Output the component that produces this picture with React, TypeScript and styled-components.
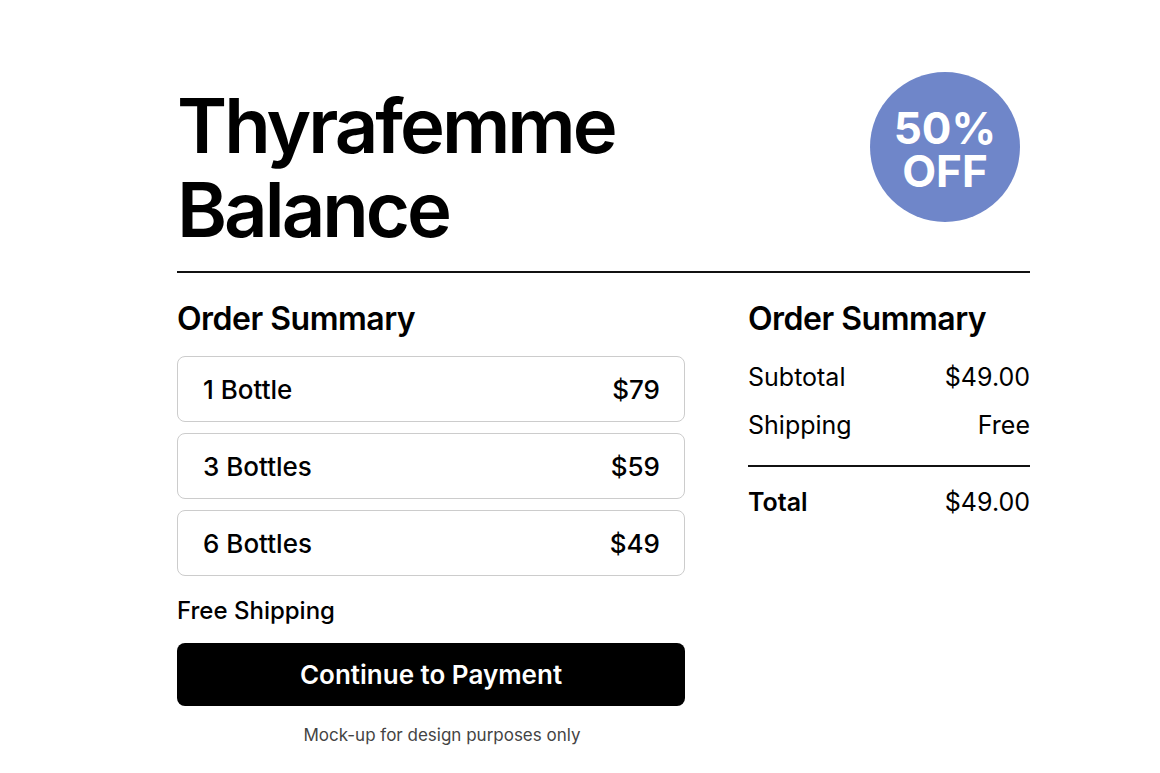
import styled, { createGlobalStyle } from "styled-components";

const GlobalStyle = createGlobalStyle`
  body {
    margin: 0;
    background: #ffffff;
    font-family: "Inter", "Liberation Sans", sans-serif;
    color: #000000;
  }
`;

const Page = styled.main`
  width: 853px;
  margin-left: 177px;
  padding-top: 72px;
`;

const Header = styled.header`
  display: flex;
  justify-content: space-between;
  align-items: flex-start;
`;

const Title = styled.h1`
  margin: 11px 0 0;
  font-size: 76px;
  line-height: 84px;
  font-weight: 600;
  letter-spacing: -3px;
`;

const Badge = styled.div`
  width: 150px;
  height: 150px;
  box-sizing: border-box;
  padding-top: 6px;
  margin-right: 10px;
  border-radius: 50%;
  background: #6f86c9;
  color: #ffffff;
  display: flex;
  flex-direction: column;
  align-items: center;
  justify-content: center;
  font-size: 44px;
  line-height: 43px;
  font-weight: 700;
`;

const Rule = styled.hr<{ $gap: number }>`
  margin: ${(p) => p.$gap}px 0 0;
  border: none;
  border-top: 2px solid #111111;
`;

const Columns = styled.section`
  display: grid;
  grid-template-columns: 508px 282px;
  justify-content: space-between;
  margin-top: 26px;
`;

const Column = styled.div`
  display: flex;
  flex-direction: column;
`;

const Heading = styled.h2`
  margin: 0;
  font-size: 32px;
  line-height: 40px;
  font-weight: 600;
  letter-spacing: -0.5px;
`;

const Options = styled.div`
  display: flex;
  flex-direction: column;
  gap: 11px;
  margin-top: 17px;
`;

const Option = styled.div`
  height: 64px;
  border: 1px solid #cccccc;
  border-radius: 8px;
  padding: 0 24px 0 25px;
  display: flex;
  justify-content: space-between;
  align-items: center;
  font-size: 26px;
  font-weight: 500;
`;

const Note = styled.p`
  margin: 19px 0 0;
  font-size: 24px;
  line-height: 32px;
  font-weight: 500;
`;

const PayButton = styled.button`
  margin-top: 16px;
  height: 63px;
  border: none;
  border-radius: 8px;
  background: #000000;
  color: #ffffff;
  font-family: inherit;
  font-size: 26px;
  font-weight: 600;
  cursor: pointer;
`;

const Disclaimer = styled.p`
  margin: 18px 0 0;
  padding-left: 22px;
  text-align: center;
  font-size: 17px;
  line-height: 22px;
  color: #444444;
`;

const Rows = styled.div<{ $top: number }>`
  display: flex;
  flex-direction: column;
  gap: 16px;
  margin-top: ${(p) => p.$top}px;
`;

const Row = styled.div`
  display: flex;
  justify-content: space-between;
  font-size: 25px;
  line-height: 32px;
  font-weight: 400;
`;

const Label = styled.span<{ $strong?: boolean }>`
  font-weight: ${(p) => (p.$strong ? 600 : 400)};
`;

const options = [
  { label: "1 Bottle", price: "$79" },
  { label: "3 Bottles", price: "$59" },
  { label: "6 Bottles", price: "$49" },
];

export default function App() {
  return (
    <>
      <GlobalStyle />
      <Page>
        <Header>
          <Title>
            Thyrafemme
            <br />
            Balance
          </Title>
          <Badge>
            <span>50%</span>
            <span>OFF</span>
          </Badge>
        </Header>
        <Rule $gap={20} />
        <Columns>
          <Column>
            <Heading>Order Summary</Heading>
            <Options>
              {options.map((o) => (
                <Option key={o.label}>
                  <span>{o.label}</span>
                  <span>{o.price}</span>
                </Option>
              ))}
            </Options>
            <Note>Free Shipping</Note>
            <PayButton>Continue to Payment</PayButton>
            <Disclaimer>Mock-up for design purposes only</Disclaimer>
          </Column>
          <Column>
            <Heading>Order Summary</Heading>
            <Rows $top={22}>
              <Row>
                <Label>Subtotal</Label>
                <span>$49.00</span>
              </Row>
              <Row>
                <Label>Shipping</Label>
                <span>Free</span>
              </Row>
            </Rows>
            <Rule $gap={24} />
            <Rows $top={19}>
              <Row>
                <Label $strong>Total</Label>
                <span>$49.00</span>
              </Row>
            </Rows>
          </Column>
        </Columns>
      </Page>
    </>
  );
}
